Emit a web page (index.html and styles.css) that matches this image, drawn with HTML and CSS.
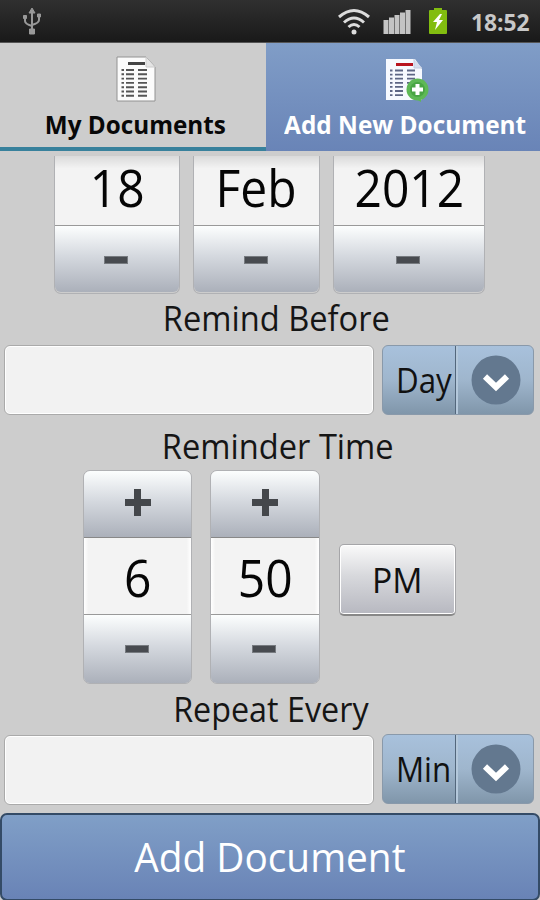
FILE: index.html
```
<!DOCTYPE html>
<html lang="en">
<head>
<meta charset="utf-8">
<title>Add New Document</title>
<link rel="stylesheet" href="styles.css">
</head>
<body>
<div class="screen">
  <header class="status">
    <svg class="usb" width="22" height="30" viewBox="0 0 22 30" fill="none" stroke="#999" stroke-width="2"><path d="M11 4v20M4 10v4q0 3 7 5M18 9v4q0 3-7 5"/><path d="M11 1l3 5H8zM8.500 22h5v5h-5zM2.500 8.500h3v3h-3zM16.500 7h3v3h-3z" fill="#999" stroke-width="1"/></svg>
    <div class="indicators">
      <svg class="wifi" width="34" height="28" viewBox="0 0 34 28" fill="none" stroke="#ddd" stroke-width="3"><path d="M2 9Q17-4 32 9M7 14.500Q17 5.500 27 14.500M11.500 19Q17 14 22.500 19"/><circle cx="17" cy="24" r="2.500" fill="#ddd" stroke="none"/></svg>
      <svg class="signal" width="28" height="26" viewBox="0 0 28 26" fill="#c4c4c4"><path d="M.5 11h5v14h-5zM6 8.500h5V25H6zM11.500 6h5v19h-5zM17 3.500h5V25h-5zM22.500 1h5v24h-5z"/></svg>
      <svg class="battery" width="20" height="28" viewBox="0 0 20 28"><path d="M6 1h8v2h4q1 0 1 1v22q0 1-1 1H2q-1 0-1-1V4q0-1 1-1h4z" fill="#82bd10"/><path d="M12 7l-7 8h4l-2 8 8-10h-4l3-6z" fill="#fff"/></svg>
      <span class="clock">18:52</span>
    </div>
  </header>
  <nav class="tabs">
    <div class="tab">
      <svg width="40" height="46" viewBox="0 0 40 46"><path d="M1 1h29l9 10v34H1z" fill="#fbfbfb" stroke="#929292"/><path d="M30 1v10h9" fill="#e4e4e4" stroke="#ccc"/><path d="M12 7.500h17" stroke="#444" stroke-width="3"/><path d="M5.500 14H8m2 0h8m4 0h9M5.500 18.300H8m2 0h8m4 0h9M5.500 22.600H8m2 0h8m4 0h9M5.500 26.900H8m2 0h8m4 0h9M5.500 31.200H8m2 0h8m4 0h9M5.500 35.500H8m2 0h8m4 0h9M5.500 39.800H8m2 0h8m4 0h9" stroke="#555" stroke-width="1.900"/></svg>
      <span class="text">My Documents</span>
    </div>
    <div class="tab active">
      <svg width="44" height="46" viewBox="0 0 44 46"><path d="M1 2h29l7 10v31H1z" fill="#f6f9ff"/><path d="M29 2v9h8" fill="#d5deee" stroke="#c2cde0"/><path d="M11 7.500h17" stroke="#b81420" stroke-width="3"/><path d="M5 13.500h2.500m2.500 0h8m4 0h8M5 17.600h2.500m2.500 0h8m4 0h8M5 21.700h2.500m2.500 0h8m4 0h8M5 25.800h2.500m2.500 0h8m4 0h8M5 29.900h2.500m2.500 0h8M5 34h2.500m2.500 0h8M5 38.100h2.500m2.500 0h8" stroke="#5d6685" stroke-width="1.800"/><circle cx="32.500" cy="32.500" r="11" fill="#5eb856"/><path d="M31 42l5 3v-5z" fill="#5eb856"/><circle cx="32.500" cy="32.500" r="7.500" fill="#49a544"/><path d="M32.500 27v11M27 32.500h11" stroke="#fff" stroke-width="4"/></svg>
      <span class="text">Add New Document</span>
    </div>
  </nav>
  <main class="form">
    <section class="date">
      <div class="picker day"><div class="value"><span class="text">18</span></div><div class="step"><i class="minus"></i></div></div>
      <div class="picker month"><div class="value"><span class="text">Feb</span></div><div class="step"><i class="minus"></i></div></div>
      <div class="picker year"><div class="value"><span class="text">2012</span></div><div class="step"><i class="minus"></i></div></div>
    </section>
    <h2 class="before"><span class="text">Remind Before</span></h2>
    <div class="row">
      <div class="input"></div>
      <div class="spinner"><div class="unit"><span class="text">Day</span></div><div class="drop"><svg width="50" height="50" viewBox="0 0 50 50"><circle cx="25" cy="25" r="24.500" fill="#63788f"/><path d="M14 21.500L25 32l11-10.500" fill="none" stroke="#fff" stroke-width="6"/></svg></div></div>
    </div>
    <h2 class="when"><span class="text">Reminder Time</span></h2>
    <section class="time">
      <div class="picker"><div class="step"><i class="plus"></i></div><div class="value"><span class="text">6</span></div><div class="step"><i class="minus"></i></div></div>
      <div class="picker"><div class="step"><i class="plus"></i></div><div class="value"><span class="text">50</span></div><div class="step"><i class="minus"></i></div></div>
      <div class="meridiem"><span class="text">PM</span></div>
    </section>
    <h2 class="repeat"><span class="text">Repeat Every</span></h2>
    <div class="row last">
      <div class="input"></div>
      <div class="spinner"><div class="unit"><span class="text">Min</span></div><div class="drop"><svg width="50" height="50" viewBox="0 0 50 50"><circle cx="25" cy="25" r="24.500" fill="#63788f"/><path d="M14 22.500L25 33l11-10.500" fill="none" stroke="#fff" stroke-width="6"/></svg></div></div>
    </div>
  </main>
  <footer class="submit"><span class="text">Add Document</span></footer>
</div>
</body>
</html>
```
FILE: styles.css
```
* { box-sizing: border-box; }
body { margin: 0; background: #ccc; font-family: "Open Sans", "Noto Sans", sans-serif; color: #111; }
.screen { width: 540px; height: 900px; overflow: hidden; display: flex; flex-direction: column; background: #cdcdcd; }
.text { display: inline-block; white-space: nowrap; }

.status { height: 43px; flex: none; display: flex; justify-content: space-between; background: linear-gradient(#303030, #191919); border-bottom: 1px solid #555; }
.usb { margin: 7px 0 0 21px; }
.indicators { display: flex; padding-right: 10px; }
.wifi { margin: 8px 12px 0 0; }
.signal { margin: 9px 17px 0 0; }
.battery { margin: 7px 23px 0 0; }
.clock { width: 59px; font-size: 24px; line-height: 44px; font-weight: 700; color: #c8c8c8; transform: scaleX(.95); transform-origin: 0 0; }

.tabs { height: 108px; flex: none; display: flex; }
.tab { width: 266px; display: flex; flex-direction: column; align-items: center; padding-top: 13px; padding-left: 6px; border-bottom: 4px solid #38819c; font-size: 25px; line-height: 34px; font-weight: 700; color: #080808; }
.tab svg { flex: none; }
.tab .text { margin: 5px 2px 0 0; transform: scaleX(.97); }
.tab.active { width: 274px; padding: 14px 0 0 4px; border: 0; color: #fff; background: linear-gradient(#809dc7, #6984b7); }
.tab.active svg { margin-left: 4px; }
.tab.active .text { margin: 4px 0 0; transform: scaleX(.975); }

.form { height: 662px; flex: none; }
.date { height: 143px; padding: 5px 0 0 54px; display: flex; gap: 13px; }
.picker { border: 1px solid #b0b1b4; border-radius: 7px; }
.day { width: 126px; }
.month { width: 127px; }
.year { width: 152px; }
.date .picker { border-top: 0; border-radius: 0 0 7px 7px; }
.value { height: 76px; display: flex; align-items: center; justify-content: center; background: linear-gradient(90deg, #fff, #f3f3f3 4%, #f3f3f3 96%, #fff); font-size: 51px; line-height: 76px; color: #050505; }
.date .value { height: 69px; padding-bottom: 6px; background: linear-gradient(#dadada, #f3f3f3 18%); line-height: 63px; }
.value .text { transform: scaleX(.94); }
.step { height: 67px; display: flex; align-items: center; justify-content: center; background: linear-gradient(#fcfefe, #d5d9df 45%, #abb0ba); border-top: 1px solid #999; }
.step:first-child { border-radius: 6px 6px 0 0; }
.step:last-child { border-radius: 0 0 6px 6px; }
.minus { width: 24px; height: 8px; background: #484b50; border: 1px solid #777b80; margin-right: 2px; }
.date .minus { margin-top: 2px; }
.plus { width: 26px; height: 27px; background: linear-gradient(#44474b, #44474b) center / 7px 27px no-repeat, linear-gradient(#44474b, #44474b) center / 26px 7px no-repeat; margin-top: -4px; }

h2 { margin: 0; font-weight: 400; font-size: 34px; line-height: 48px; text-align: center; color: #151515; }
h2 .text { transform: scaleX(.96); }
.before { height: 51px; padding-left: 13px; }
.when { height: 55px; padding: 7px 0 0 16px; }
.repeat { height: 50px; padding-left: 2px; }
.repeat .text { transform: scaleX(.95); }
.row { height: 70px; display: flex; padding: 0 6px 0 4px; justify-content: space-between; }
.last .spinner { margin-top: -1px; }
.input { width: 370px; height: 70px; background: #f2f2f2; border: 1px solid #aaa; border-radius: 6px; box-shadow: inset 0 0 0 1px #fff; }
.spinner { width: 152px; height: 70px; display: flex; border: 1px solid #8999aa; border-radius: 6px; background: linear-gradient(#a8c1dc, #9fb6cd 50%, #8096aa); }
.unit { width: 73px; border-right: 1px solid #53677c; font-size: 34px; line-height: 68px; padding-left: 11px; }
.unit .text { margin-left: 1px; transform: scaleX(.92); transform-origin: 20% 50%; }
.drop { flex: 1; display: flex; align-items: center; justify-content: center; border-left: 2px solid #b4c8db; padding-left: 1px; }

.time { height: 215px; padding: 0 0 0 83px; display: flex; gap: 18px; }
.time .picker { width: 110px; height: 214px; }
.time .picker:first-child { width: 109px; }
.time .step:first-child { height: 66px; border-top: 0; }
.time .value { height: 77px; padding-top: 1px; border-top: 1px solid #888; }
.time .step:last-child { height: 69px; }
.meridiem { width: 117px; height: 72px; margin: 74px 0 0 1px; border: 1px solid #a5a5a8; border-bottom: 2px solid #888; border-radius: 5px; background: linear-gradient(#fafafa, #d7d8dc 45%, #b7b8c0); box-shadow: inset 0 0 0 1px #fff; font-size: 35px; line-height: 70px; text-align: center; }
.meridiem .text { transform: scaleX(.96); }

.submit { flex: 1; border: 2px solid #344b66; border-radius: 7px; background: linear-gradient(#809fc7, #6983b6); color: #fff; font-size: 40px; line-height: 84px; text-align: center; }
.submit .text { transform: scaleX(.97); }
```
